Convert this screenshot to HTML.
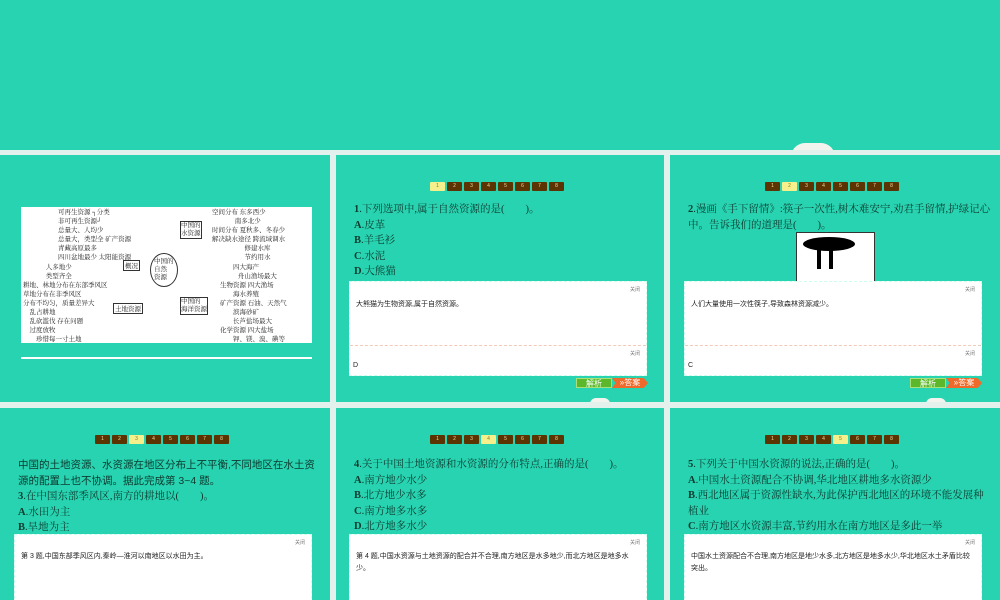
<!DOCTYPE html>
<html><head><meta charset="utf-8"><style>
*{margin:0;padding:0;box-sizing:border-box}
body{width:1000px;height:600px;overflow:hidden;background:#e3f1ed;position:relative;font-family:"Liberation Serif","Noto Serif CJK SC",serif;color:#0e3a2e}
.s{position:absolute;background:#27d3b1;overflow:hidden}
.pg{position:absolute;display:flex;gap:2px}
.pg span{width:15px;height:9px;background:#5b3402;border-radius:1px;color:#f3d9a0;font:5px "Liberation Sans",sans-serif;text-align:center;line-height:9px}
.pg span.a{background:#f5ef8c;color:#8a7a20}
.t{position:absolute;font-size:10.5px;line-height:15.5px}
.t b{font-weight:bold}
.box{position:absolute;background:#fff;border:1px dashed #cfe}
.cl{position:absolute;right:6px;font:5px "Liberation Sans",sans-serif;color:#777}
.bt{position:absolute;font:8px "Liberation Sans","Noto Sans CJK SC",sans-serif;color:#fff;height:10px;line-height:10px;text-align:center}
.sm{position:absolute;font:7px "Liberation Sans","Noto Sans CJK SC",sans-serif;color:#222}
.dome{position:absolute;width:44px;height:14px;background:#f4f4ee;border-radius:22px 22px 0 0}
.mm{position:absolute;font:6.5px "Liberation Serif","Noto Serif CJK SC",serif;color:#222;white-space:nowrap}
</style></head><body>
<div class="s" style="left:0;top:0;width:1000px;height:150px"><div class="dome" style="left:791px;top:143px"></div></div>

<!-- slide1 -->
<div class="s" style="left:0;top:155px;width:330px;height:247px">
 <div style="position:absolute;left:21px;top:52px;width:291px;height:136px;background:#fff"></div>
 <div style="position:absolute;left:21px;top:202px;width:291px;height:2px;background:#fff"></div>
 <div class="mm" style="left:58px;top:53px;line-height:9px">可再生资源 ┐分类<br>非可再生资源┘<br>总量大、人均少<br>总量大，类型全 矿产资源<br>青藏高原最多<br>四川盆地最少 太阳能资源</div>
 <div class="mm" style="left:123px;top:105px;border:1px solid #333;padding:0 1px">概况</div>
 <div class="mm" style="left:150px;top:98px;border:1px solid #333;border-radius:50%;padding:4px 3px;line-height:8px">中国的<br>自然<br>资源</div>
 <div class="mm" style="left:180px;top:66px;border:1px solid #333;line-height:8px">中国的<br>水资源</div>
 <div class="mm" style="left:180px;top:142px;border:1px solid #333;line-height:8px">中国的<br>海洋资源</div>
 <div class="mm" style="left:212px;top:53px;line-height:9px">空间分布 东多西少<br>&nbsp;&nbsp;&nbsp;&nbsp;&nbsp;&nbsp;&nbsp;&nbsp;&nbsp;&nbsp;&nbsp;&nbsp;&nbsp;&nbsp;南多北少<br>时间分布 夏秋多、冬春少<br>解决缺水途径 跨流域调水<br>&nbsp;&nbsp;&nbsp;&nbsp;&nbsp;&nbsp;&nbsp;&nbsp;&nbsp;&nbsp;&nbsp;&nbsp;&nbsp;&nbsp;&nbsp;&nbsp;&nbsp;&nbsp;&nbsp;&nbsp;修建水库<br>&nbsp;&nbsp;&nbsp;&nbsp;&nbsp;&nbsp;&nbsp;&nbsp;&nbsp;&nbsp;&nbsp;&nbsp;&nbsp;&nbsp;&nbsp;&nbsp;&nbsp;&nbsp;&nbsp;&nbsp;节约用水</div>
 <div class="mm" style="left:220px;top:108px;line-height:9px">&nbsp;&nbsp;&nbsp;&nbsp;&nbsp;&nbsp;&nbsp;&nbsp;四大海产<br>&nbsp;&nbsp;&nbsp;&nbsp;&nbsp;&nbsp;&nbsp;&nbsp;&nbsp;&nbsp;&nbsp;舟山渔场最大<br>生物资源 四大渔场<br>&nbsp;&nbsp;&nbsp;&nbsp;&nbsp;&nbsp;&nbsp;&nbsp;海水养殖<br>矿产资源 石油、天然气<br>&nbsp;&nbsp;&nbsp;&nbsp;&nbsp;&nbsp;&nbsp;&nbsp;滨海砂矿<br>&nbsp;&nbsp;&nbsp;&nbsp;&nbsp;&nbsp;&nbsp;&nbsp;长芦盐场最大<br>化学资源 四大盐场<br>&nbsp;&nbsp;&nbsp;&nbsp;&nbsp;&nbsp;&nbsp;&nbsp;钾、镁、溴、碘等</div>
 <div class="mm" style="left:23px;top:108px;line-height:9px">&nbsp;&nbsp;&nbsp;&nbsp;&nbsp;&nbsp;&nbsp;&nbsp;&nbsp;&nbsp;&nbsp;&nbsp;&nbsp;&nbsp;人多地少<br>&nbsp;&nbsp;&nbsp;&nbsp;&nbsp;&nbsp;&nbsp;&nbsp;&nbsp;&nbsp;&nbsp;&nbsp;&nbsp;&nbsp;类型齐全<br>耕地、林地分布在东部季风区<br>草地分布在非季风区<br>分布不均匀，质量差异大<br>&nbsp;&nbsp;&nbsp;&nbsp;乱占耕地<br>&nbsp;&nbsp;&nbsp;&nbsp;乱砍滥伐 存在问题<br>&nbsp;&nbsp;&nbsp;&nbsp;过度放牧<br>&nbsp;&nbsp;&nbsp;&nbsp;&nbsp;&nbsp;&nbsp;&nbsp;珍惜每一寸土地</div>
 <div class="mm" style="left:113px;top:148px;border:1px solid #333;padding:0 1px">土地资源</div>
</div>

<!-- slide2 -->
<div class="s" style="left:336px;top:155px;width:328px;height:247px">
 <div class="pg" style="left:94px;top:27px"><span class="a">1</span><span>2</span><span>3</span><span>4</span><span>5</span><span>6</span><span>7</span><span>8</span></div>
 <div class="t" style="left:18px;top:47px"><b>1</b>.下列选项中,属于自然资源的是(　　)。<br><b>A</b>.皮革<br><b>B</b>.羊毛衫<br><b>C</b>.水泥<br><b>D</b>.大熊猫</div>
 <div class="box" style="left:13px;top:126px;width:298px;height:95px">
  <div class="cl" style="top:4px">关闭</div>
  <div class="sm" style="left:6px;top:17px">大熊猫为生物资源,属于自然资源。</div>
  <div style="position:absolute;left:0;right:0;top:63px;border-top:1px dashed #f3c9b9"></div>
  <div class="cl" style="top:68px">关闭</div>
  <div class="sm" style="left:3px;top:80px">D</div>
 </div>
 <div class="bt" style="left:240px;top:223px;width:36px;background:#5cb82a;border:1px solid #a8e07a">解析</div>
 <div class="bt" style="left:276px;top:223px;width:36px;background:#ef6a2a;clip-path:polygon(0 0,88% 0,100% 50%,88% 100%,0 100%,10% 50%)">»答案</div>
 <div class="dome" style="left:254px;top:243px;width:20px;height:6px"></div>
</div>

<!-- slide3 -->
<div class="s" style="left:670px;top:155px;width:330px;height:247px">
 <div class="pg" style="left:95px;top:27px"><span>1</span><span class="a">2</span><span>3</span><span>4</span><span>5</span><span>6</span><span>7</span><span>8</span></div>
 <div class="t" style="left:18px;top:47px;width:305px"><b>2</b>.漫画《手下留情》:筷子一次性,树木难安宁,劝君手留情,护绿记心中。告诉我们的道理是(　　)。</div>
 <div style="position:absolute;left:126px;top:77px;width:79px;height:50px;background:#fff;border:1px solid #333">
  <div style="position:absolute;left:6px;top:4px;width:52px;height:14px;background:#000;border-radius:50%"></div>
  <div style="position:absolute;left:20px;top:14px;width:4px;height:22px;background:#000"></div>
  <div style="position:absolute;left:32px;top:14px;width:4px;height:22px;background:#000"></div>
 </div>
 <div class="box" style="left:14px;top:126px;width:298px;height:95px">
  <div class="cl" style="top:4px">关闭</div>
  <div class="sm" style="left:6px;top:17px">人们大量使用一次性筷子,导致森林资源减少。</div>
  <div style="position:absolute;left:0;right:0;top:63px;border-top:1px dashed #f3c9b9"></div>
  <div class="cl" style="top:68px">关闭</div>
  <div class="sm" style="left:3px;top:80px">C</div>
 </div>
 <div class="bt" style="left:240px;top:223px;width:36px;background:#5cb82a;border:1px solid #a8e07a">解析</div>
 <div class="bt" style="left:276px;top:223px;width:36px;background:#ef6a2a;clip-path:polygon(0 0,88% 0,100% 50%,88% 100%,0 100%,10% 50%)">»答案</div>
 <div class="dome" style="left:256px;top:243px;width:20px;height:6px"></div>
</div>

<!-- slide4 -->
<div class="s" style="left:0;top:408px;width:330px;height:192px">
 <div class="pg" style="left:95px;top:27px"><span>1</span><span>2</span><span class="a">3</span><span>4</span><span>5</span><span>6</span><span>7</span><span>8</span></div>
 <div class="t" style="left:18px;top:50px;width:300px"><span style="font-family:'Liberation Sans','Noto Sans CJK SC',sans-serif">中国的土地资源、水资源在地区分布上不平衡,不同地区在水土资源的配置上也不协调。据此完成第 3~4 题。</span><br><b>3</b>.在中国东部季风区,南方的耕地以(　　)。<br><b>A</b>.水田为主<br><b>B</b>.旱地为主</div>
 <div class="box" style="left:14px;top:126px;width:298px;height:80px">
  <div class="cl" style="top:4px">关闭</div>
  <div class="sm" style="left:6px;top:16px">第 3 题,中国东部季风区内,秦岭—淮河以南地区以水田为主。</div>
 </div>
</div>

<!-- slide5 -->
<div class="s" style="left:336px;top:408px;width:328px;height:192px">
 <div class="pg" style="left:94px;top:27px"><span>1</span><span>2</span><span>3</span><span class="a">4</span><span>5</span><span>6</span><span>7</span><span>8</span></div>
 <div class="t" style="left:18px;top:49px"><b>4</b>.关于中国土地资源和水资源的分布特点,正确的是(　　)。<br><b>A</b>.南方地少水少<br><b>B</b>.北方地少水多<br><b>C</b>.南方地多水多<br><b>D</b>.北方地多水少</div>
 <div class="box" style="left:13px;top:126px;width:298px;height:80px">
  <div class="cl" style="top:4px">关闭</div>
  <div class="sm" style="left:6px;top:16px;width:285px;line-height:12px">第 4 题,中国水资源与土地资源的配合并不合理,南方地区是水多地少,而北方地区是地多水少。</div>
 </div>
</div>

<!-- slide6 -->
<div class="s" style="left:670px;top:408px;width:330px;height:192px">
 <div class="pg" style="left:95px;top:27px"><span>1</span><span>2</span><span>3</span><span>4</span><span class="a">5</span><span>6</span><span>7</span><span>8</span></div>
 <div class="t" style="left:18px;top:49px;width:300px"><b>5</b>.下列关于中国水资源的说法,正确的是(　　)。<br><b>A</b>.中国水土资源配合不协调,华北地区耕地多水资源少<br><b>B</b>.西北地区属于资源性缺水,为此保护西北地区的环境不能发展种植业<br><b>C</b>.南方地区水资源丰富,节约用水在南方地区是多此一举</div>
 <div class="box" style="left:14px;top:126px;width:298px;height:80px">
  <div class="cl" style="top:4px">关闭</div>
  <div class="sm" style="left:6px;top:16px;width:285px;line-height:12px">中国水土资源配合不合理,南方地区是地少水多,北方地区是地多水少,华北地区水土矛盾比较突出。</div>
 </div>
</div>
</body></html>
